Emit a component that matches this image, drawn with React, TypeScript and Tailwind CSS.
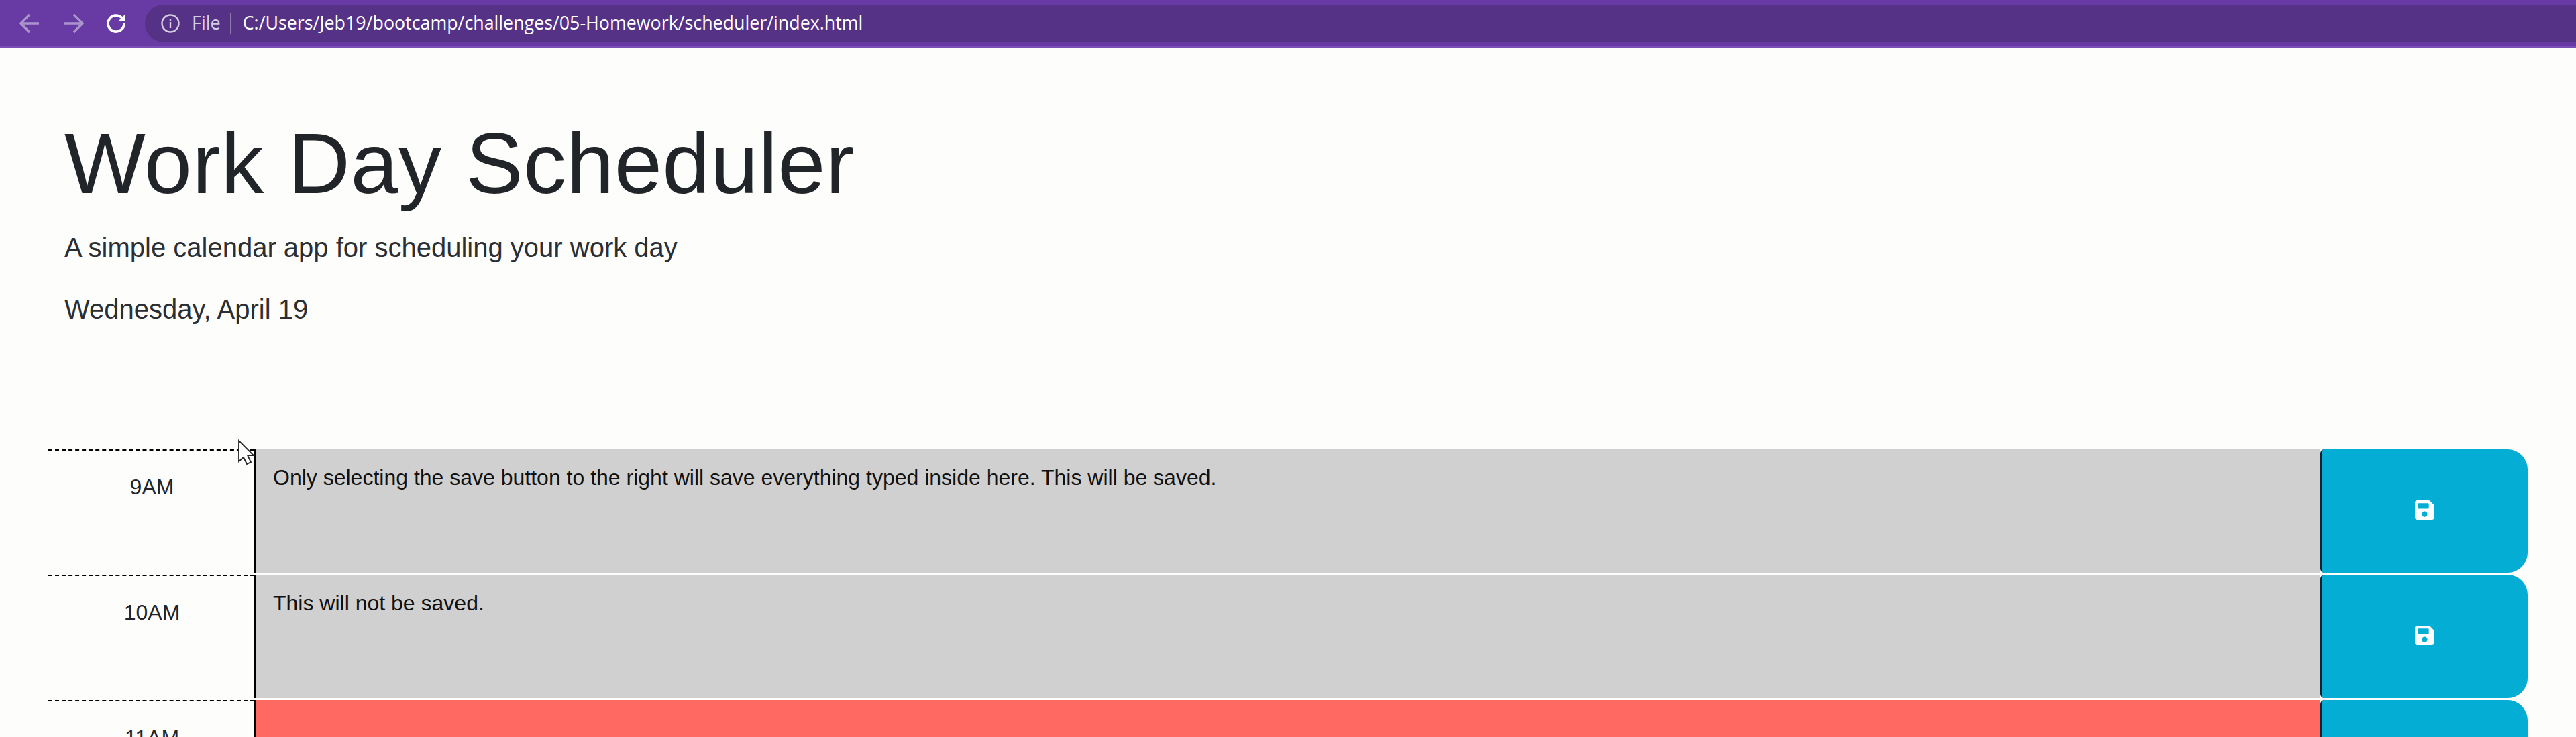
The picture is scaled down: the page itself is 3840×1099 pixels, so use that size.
import { FaSave } from "react-icons/fa";

const rows = [
  { hour: "9AM", bg: "bg-[#d0d0d0]", text: "Only selecting the save button to the right will save everything typed inside here. This will be saved." },
  { hour: "10AM", bg: "bg-[#d0d0d0]", text: "This will not be saved." },
  { hour: "11AM", bg: "bg-[#ff6961]", text: "" },
];

function Toolbar() {
  return (
    <div className="flex h-[71px] shrink-0 items-center bg-[#673ba3] border-b-2 border-[#7a4fb5] pl-[29px] text-white">
      <svg className="w-[30px] h-[30px] shrink-0 opacity-45" viewBox="0 0 30 30" fill="none" stroke="currentColor" strokeWidth="3.4">
        <path d="M29 15H3M15 2L2 15l13 13" />
      </svg>
      <svg className="ml-[36px] w-[30px] h-[30px] shrink-0 opacity-45" viewBox="0 0 30 30" fill="none" stroke="currentColor" strokeWidth="3.4">
        <path d="M1 15h26M15 2l13 13-13 13" />
      </svg>
      <svg className="ml-[33px] w-[30px] h-[30px] shrink-0" viewBox="0 0 30 30" fill="none" stroke="currentColor" strokeWidth="3.8">
        <path d="M25 8.5A12 12 0 1 0 27 15" />
        <path d="M29 1v11H18z" fill="currentColor" stroke="none" />
      </svg>
      <div className="ml-[28px] flex h-[56px] flex-1 items-center rounded-l-[28px] bg-[#553285] pl-[24px] font-['Open_Sans',sans-serif] text-[26.8px]">
        <svg className="w-[28px] h-[28px] shrink-0 text-[#d5cde2]" viewBox="0 0 28 28" fill="none" stroke="currentColor" strokeWidth="2.4">
          <circle cx="14" cy="14" r="12.5" />
          <path d="M14 12v9M14 7v3" />
        </svg>
        <span className="ml-[18px] text-[27px] text-[#d5cde2]">File</span>
        <span className="ml-[14px] h-[32px] w-[2px] bg-[#8f78ad]" />
        <span className="ml-[17px]">C:/Users/Jeb19/bootcamp/challenges/05-Homework/scheduler/index.html</span>
      </div>
    </div>
  );
}

function Cursor() {
  return (
    <svg className="absolute left-[354px] top-[655px] w-[26px] h-[40px]" viewBox="0 0 26 40" fill="#fff" stroke="#222" strokeWidth="1.8">
      <path d="M2 2v31l7-6 5 10 6-3-5-10h9z" />
    </svg>
  );
}

export default function App() {
  return (
    <div className="relative flex h-screen flex-col overflow-hidden bg-[#fdfdfc] font-['Liberation_Sans',Arial,sans-serif] text-[#212529]">
      <Toolbar />
      <header className="px-[96px] pt-[96px]">
        <h1 className="text-[128px] leading-[154px] font-normal tracking-[0.35px]">Work Day Scheduler</h1>
        <p className="mt-[18px] text-[40px] leading-[60px] text-[#2b2f33]">A simple calendar app for scheduling your work day</p>
        <p className="mt-[32px] text-[40px] leading-[60px] text-[#2b2f33]">Wednesday, April 19</p>
      </header>
      <main className="mt-[179px] px-[72px]">
        {rows.map((r) => (
          <div key={r.hour} className="flex h-[187px]">
            <div className="w-[307px] shrink-0 border-t-2 border-dashed border-black pl-[2px] pt-[30px] text-center text-[32px] leading-[48px]">
              {r.hour}
            </div>
            <div className="mb-[3px] flex flex-1 flex-col">
              <textarea
                readOnly
                defaultValue={r.text}
                className={`h-full w-full resize-none border-l-2 border-black ${r.bg} pl-[26px] pt-[18px] text-[32px] leading-[48px] text-[#111] outline-none`}
              />
            </div>
            <button className="mb-[3px] flex w-[309px] shrink-0 items-center justify-center rounded-l-[6px] rounded-r-[30px] border-l-2 border-[#123] bg-[#04add4] pb-[3px] text-white">
              <FaSave size={33} />
            </button>
          </div>
        ))}
      </main>
      <Cursor />
    </div>
  );
}
